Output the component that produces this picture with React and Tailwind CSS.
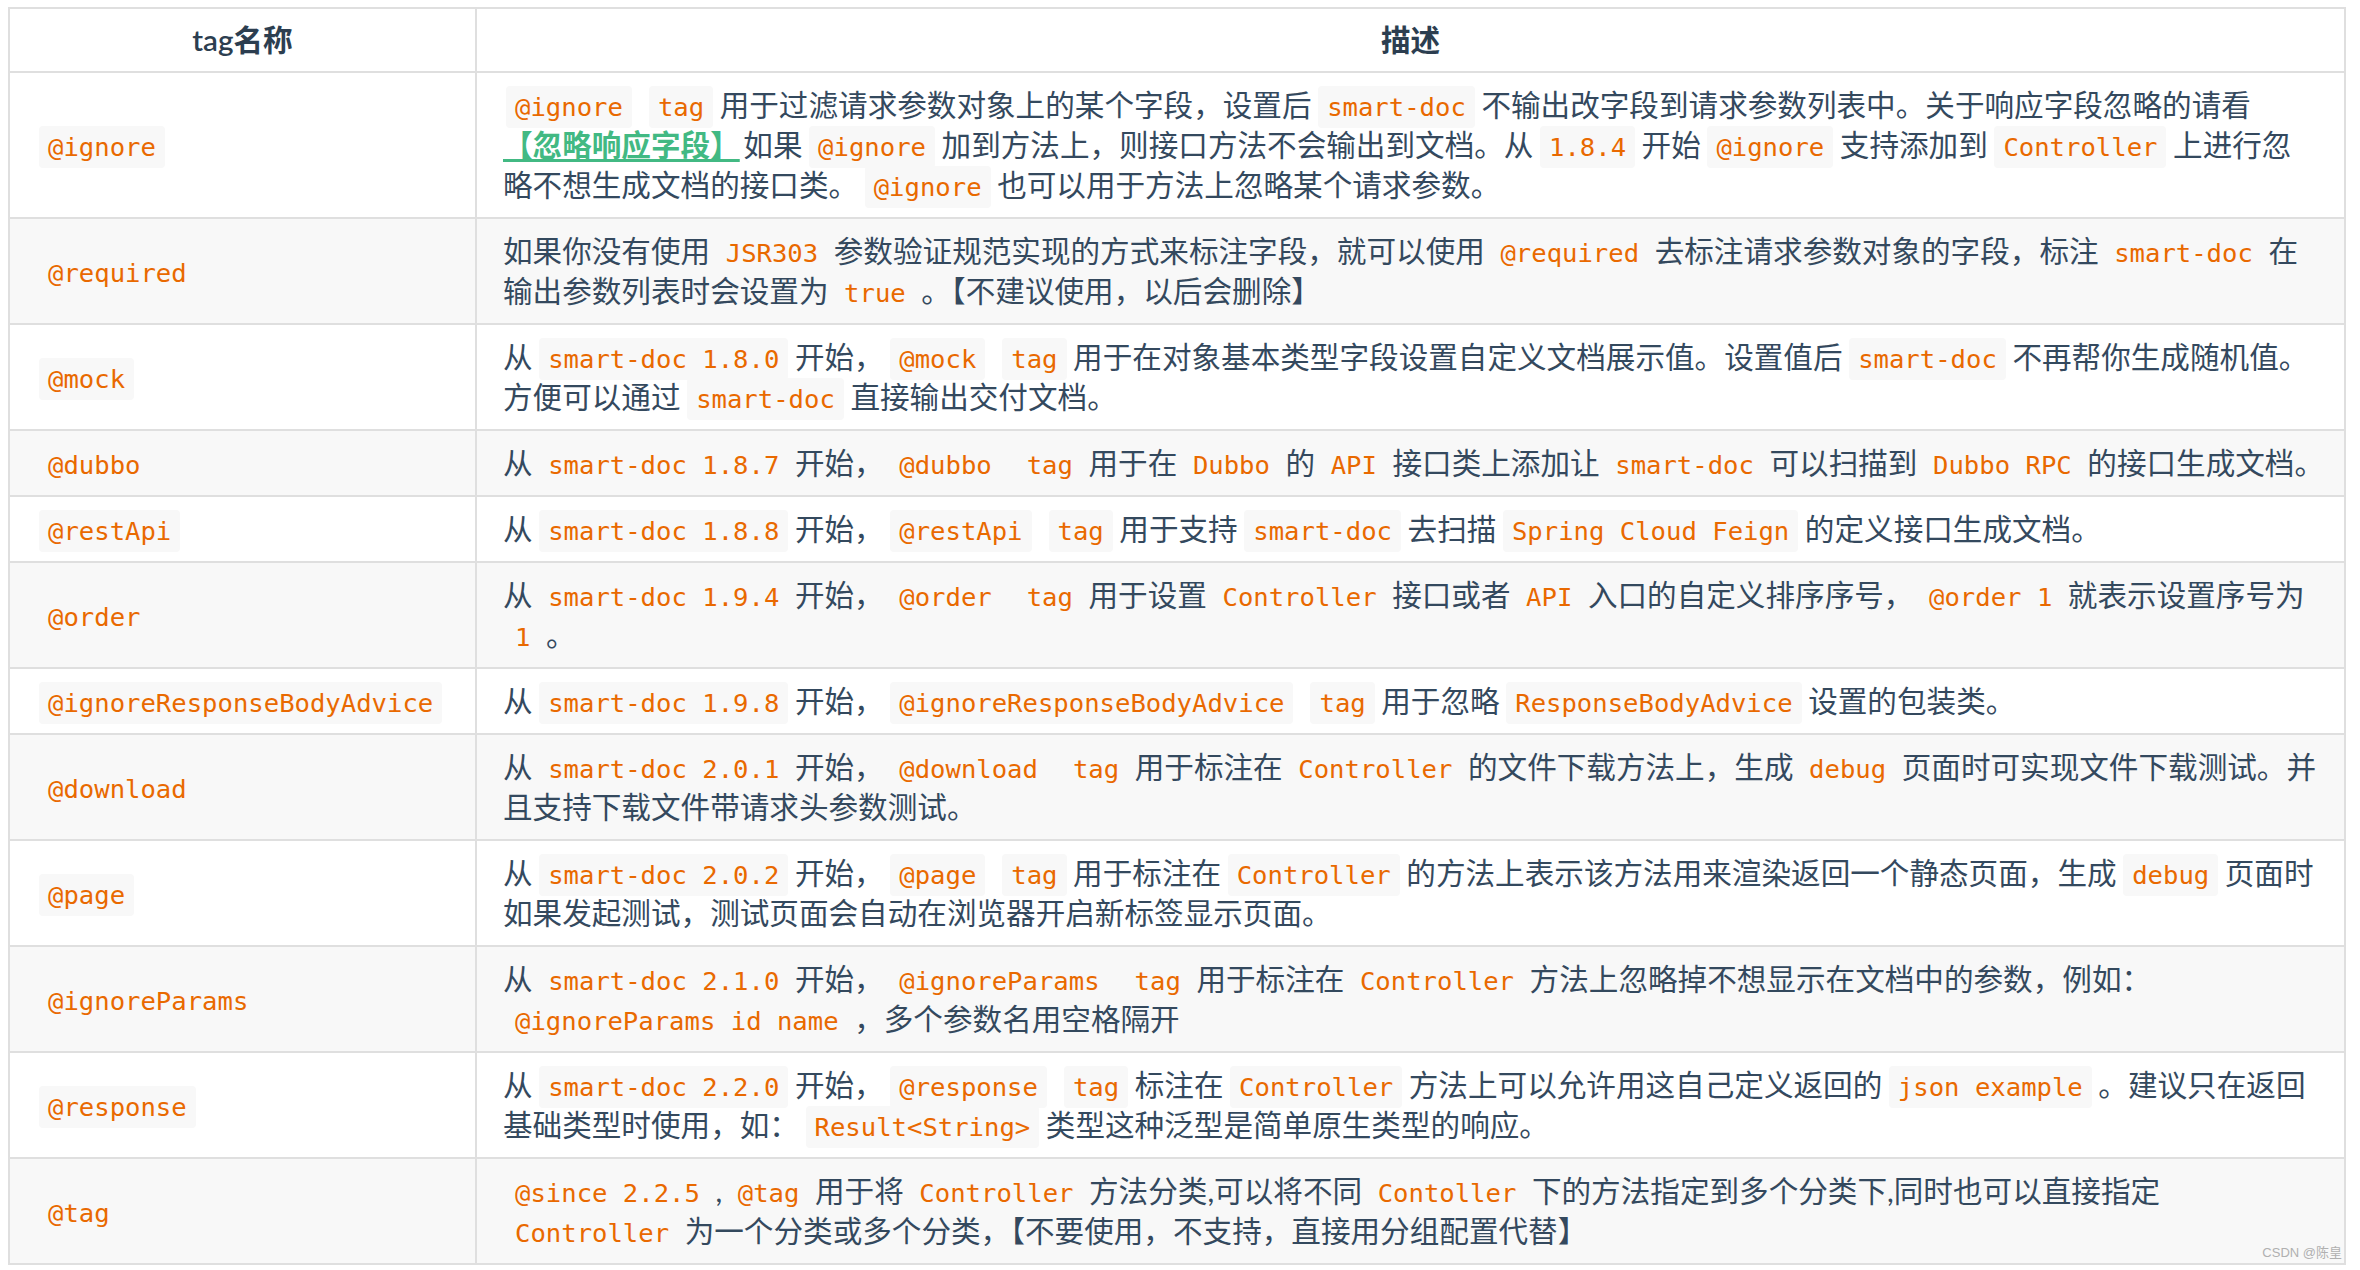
import React from 'react'

// docsify-style table of smart-doc custom tags
// { c } = inline code, { a } = link, { sp } = gap between two adjacent code chips

const G = { sp: 11 }

const rows = [
  {
    tag: '@ignore',
    lines: [
      [{ c: '@ignore' }, G, { c: 'tag' }, ' 用于过滤请求参数对象上的某个字段，设置后 ', { c: 'smart-doc' }, ' 不输出改字段到请求参数列表中。关于响应字段忽略的请看'],
      [{ a: '【忽略响应字段】' }, ' 如果 ', { c: '@ignore' }, ' 加到方法上，则接口方法不会输出到文档。从 ', { c: '1.8.4' }, ' 开始 ', { c: '@ignore' }, ' 支持添加到 ', { c: 'Controller' }, ' 上进行忽'],
      ['略不想生成文档的接口类。 ', { c: '@ignore' }, ' 也可以用于方法上忽略某个请求参数。'],
    ],
  },
  {
    tag: '@required',
    lines: [
      ['如果你没有使用 ', { c: 'JSR303' }, ' 参数验证规范实现的方式来标注字段，就可以使用 ', { c: '@required' }, ' 去标注请求参数对象的字段，标注 ', { c: 'smart-doc' }, ' 在'],
      ['输出参数列表时会设置为 ', { c: 'true' }, ' 。【不建议使用，以后会删除】'],
    ],
  },
  {
    tag: '@mock',
    lines: [
      ['从 ', { c: 'smart-doc 1.8.0' }, ' 开始， ', { c: '@mock' }, G, { c: 'tag' }, ' 用于在对象基本类型字段设置自定义文档展示值。设置值后 ', { c: 'smart-doc' }, ' 不再帮你生成随机值。'],
      ['方便可以通过 ', { c: 'smart-doc' }, ' 直接输出交付文档。'],
    ],
  },
  {
    tag: '@dubbo',
    lines: [
      ['从 ', { c: 'smart-doc 1.8.7' }, ' 开始， ', { c: '@dubbo' }, G, { c: 'tag' }, ' 用于在 ', { c: 'Dubbo' }, ' 的 ', { c: 'API' }, ' 接口类上添加让 ', { c: 'smart-doc' }, ' 可以扫描到 ', { c: 'Dubbo RPC' }, ' 的接口生成文档。'],
    ],
  },
  {
    tag: '@restApi',
    lines: [
      ['从 ', { c: 'smart-doc 1.8.8' }, ' 开始， ', { c: '@restApi' }, G, { c: 'tag' }, ' 用于支持 ', { c: 'smart-doc' }, ' 去扫描 ', { c: 'Spring Cloud Feign' }, ' 的定义接口生成文档。'],
    ],
  },
  {
    tag: '@order',
    lines: [
      ['从 ', { c: 'smart-doc 1.9.4' }, ' 开始， ', { c: '@order' }, G, { c: 'tag' }, ' 用于设置 ', { c: 'Controller' }, ' 接口或者 ', { c: 'API' }, ' 入口的自定义排序序号， ', { c: '@order 1' }, ' 就表示设置序号为'],
      [{ c: '1' }, ' 。'],
    ],
  },
  {
    tag: '@ignoreResponseBodyAdvice',
    lines: [
      ['从 ', { c: 'smart-doc 1.9.8' }, ' 开始， ', { c: '@ignoreResponseBodyAdvice' }, G, { c: 'tag' }, ' 用于忽略 ', { c: 'ResponseBodyAdvice' }, ' 设置的包装类。'],
    ],
  },
  {
    tag: '@download',
    lines: [
      ['从 ', { c: 'smart-doc 2.0.1' }, ' 开始， ', { c: '@download' }, G, { c: 'tag' }, ' 用于标注在 ', { c: 'Controller' }, ' 的文件下载方法上，生成 ', { c: 'debug' }, ' 页面时可实现文件下载测试。并'],
      ['且支持下载文件带请求头参数测试。'],
    ],
  },
  {
    tag: '@page',
    lines: [
      ['从 ', { c: 'smart-doc 2.0.2' }, ' 开始， ', { c: '@page' }, G, { c: 'tag' }, ' 用于标注在 ', { c: 'Controller' }, ' 的方法上表示该方法用来渲染返回一个静态页面，生成 ', { c: 'debug' }, ' 页面时'],
      ['如果发起测试，测试页面会自动在浏览器开启新标签显示页面。'],
    ],
  },
  {
    tag: '@ignoreParams',
    lines: [
      ['从 ', { c: 'smart-doc 2.1.0' }, ' 开始， ', { c: '@ignoreParams' }, G, { c: 'tag' }, ' 用于标注在 ', { c: 'Controller' }, ' 方法上忽略掉不想显示在文档中的参数，例如：'],
      [{ c: '@ignoreParams id name' }, ' ，多个参数名用空格隔开'],
    ],
  },
  {
    tag: '@response',
    lines: [
      ['从 ', { c: 'smart-doc 2.2.0' }, ' 开始， ', { c: '@response' }, G, { c: 'tag' }, ' 标注在 ', { c: 'Controller' }, ' 方法上可以允许用这自己定义返回的 ', { c: 'json example' }, ' 。建议只在返回'],
      ['基础类型时使用，如： ', { c: 'Result<String>' }, ' 类型这种泛型是简单原生类型的响应。'],
    ],
  },
  {
    tag: '@tag',
    lines: [
      [{ c: '@since 2.2.5' }, ' , ', { c: '@tag' }, ' 用于将 ', { c: 'Controller' }, ' 方法分类,可以将不同 ', { c: 'Contoller' }, ' 下的方法指定到多个分类下,同时也可以直接指定'],
      [{ c: 'Controller' }, ' 为一个分类或多个分类，【不要使用，不支持，直接用分组配置代替】'],
    ],
  },
]

function Code({ children }) {
  return (
    <code className="mx-[3px] rounded-[4px] bg-[#f8f8f8] px-[9px] py-[6px] font-['DejaVu_Sans_Mono',monospace] text-[25.6px] leading-[20px] text-[#e96900] [word-spacing:0px]">
      {children}
    </code>
  )
}

function Seg({ s }) {
  if (typeof s === 'string') return s
  if (s.sp) return <span className="inline-block w-[11px]" />
  if (s.a) {
    return (
      <a className="font-semibold text-[#42b983] underline decoration-[#42b983] decoration-[3px] underline-offset-[3px]">
        {s.a}
      </a>
    )
  }
  return <Code>{s.c}</Code>
}

export default function App() {
  return (
    <div className="h-[1270px] w-[2360px] overflow-hidden bg-white font-['Lato','Noto_Sans_CJK_SC',sans-serif] text-[29.6px] leading-[40px] text-[#34495e]">
      <div className="relative ml-[8px] mt-[7px] w-[2338px]">
        <table className="w-[2338px] table-fixed border-collapse">
          <colgroup>
            <col className="w-[467px]" />
            <col />
          </colgroup>
          <thead>
            <tr>
              <th className="border-2 border-[#dfdfdf] px-[26px] py-[11px] text-center font-semibold text-[#2c3e50]">tag名称</th>
              <th className="border-2 border-[#dfdfdf] px-[26px] py-[11px] text-center font-semibold text-[#2c3e50]">描述</th>
            </tr>
          </thead>
          <tbody>
            {rows.map((r, i) => (
              <tr key={r.tag} className={i % 2 === 1 ? 'bg-[#f8f8f8]' : 'bg-white'}>
                <td className="border-2 border-[#dfdfdf] px-[26px] py-[12px] align-middle whitespace-nowrap">
                  <Code>{r.tag}</Code>
                </td>
                <td className="border-2 border-[#dfdfdf] px-[26px] py-[12px] align-middle [word-spacing:-4px]">
                  {r.lines.map((line, j) => (
                    <div key={j} className="whitespace-nowrap">
                      {line.map((s, k) => (
                        <Seg key={k} s={s} />
                      ))}
                    </div>
                  ))}
                </td>
              </tr>
            ))}
          </tbody>
        </table>
        <span className="absolute bottom-[4px] right-[4px] font-['Liberation_Sans','Noto_Sans_CJK_SC',sans-serif] text-[13px] leading-[16px] text-[#b0b0b0]">
          CSDN @陈皇
        </span>
      </div>
    </div>
  )
}
